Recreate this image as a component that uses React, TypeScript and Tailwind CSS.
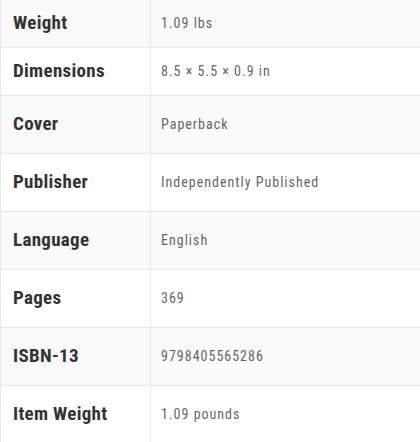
import React from 'react';

const rows = [
  { label: 'Weight', value: '1.09 lbs', h: 'h-[47px]' },
  { label: 'Dimensions', value: '8.5 × 5.5 × 0.9 in', h: 'h-[48px]' },
  { label: 'Cover', value: 'Paperback', h: 'h-[58px]' },
  { label: 'Publisher', value: 'Independently Published', h: 'h-[58px]' },
  { label: 'Language', value: 'English', h: 'h-[58px]' },
  { label: 'Pages', value: '369', h: 'h-[58px]' },
  { label: 'ISBN-13', value: '9798405565286', h: 'h-[58px]' },
  { label: 'Item Weight', value: '1.09 pounds', h: 'h-[58px]' },
];

const App = () => {
  return (
    <div className="w-[420px] bg-white font-['Roboto',sans-serif] font-stretch-condensed">
      <table className="w-full border-collapse border-l border-[#e8e8e8]">
        <tbody>
          {rows.map((row, i) => (
            <tr
              key={row.label}
              className={`${row.h} border-b border-[#e8e8e8] ${i % 2 === 0 ? 'bg-[#fafafa]' : 'bg-white'}`}
            >
              <th className="w-[150px] border-r border-[#e8e8e8] pl-3 text-left align-middle text-[19px] font-bold text-[#333] tracking-[0.3px]">
                {row.label}
              </th>
              <td className="pl-[10px] align-middle text-[14px] text-[#666] tracking-[1px]">
                {row.value}
              </td>
            </tr>
          ))}
        </tbody>
      </table>
    </div>
  );
};

export default App;
